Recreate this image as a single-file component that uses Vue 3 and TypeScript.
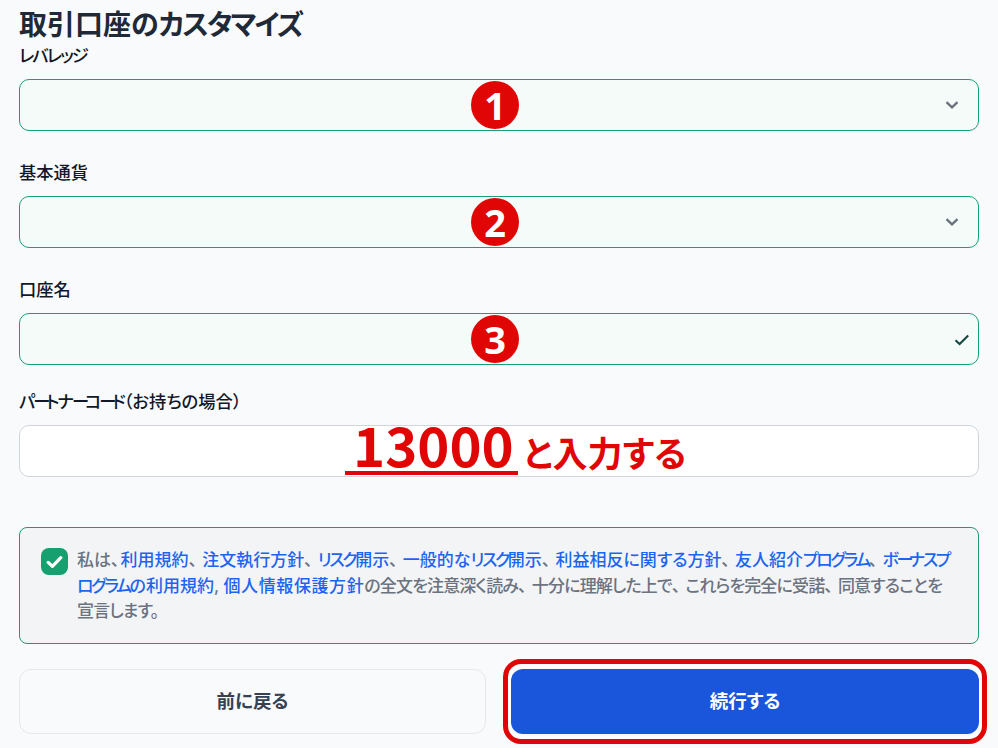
<script setup lang="ts">
interface Field { label: string; badge: string; icon: 'chevron' | 'check'; }
interface Run { text: string; cls: string; }
interface Segment { text: string; link?: boolean; cls?: string; }

const fields: Field[] = [
  { label: 'レバレッジ', badge: '1', icon: 'chevron' },
  { label: '基本通貨', badge: '2', icon: 'chevron' },
  { label: '口座名', badge: '3', icon: 'check' },
];

const agreement: Segment[] = [
  { text: '私は、', cls: 'intro' },
  { text: '利用規約', link: true }, { text: '、' },
  { text: '注文執行方針', link: true }, { text: '、' },
  { text: 'リスク開示', link: true }, { text: '、' },
  { text: '一般的なリスク開示', link: true }, { text: '、' },
  { text: '利益相反に関する方針', link: true }, { text: '、' },
  { text: '友人紹介プログラム', link: true }, { text: '、' },
  { text: 'ボーナスプログラムの利用規約', link: true }, { text: ', ' },
  { text: '個人情報保護方針', link: true, cls: 'wide' },
  { text: 'の全文を注意深く読み、十分に理解した上で、これらを完全に受諾、同意することを宣言します。', cls: 'tail' },
];

// Katakana runs and the long vowel mark are set tighter than kanji, and the comma wider.
function runs(text: string): Run[] {
  const parts = text.match(/ー|[ァ-ヶ]+|、|[^ァ-ヶー、]+/g) ?? [];
  return parts.map((part) => ({
    text: part,
    cls: part === 'ー' ? 'long' : /^[ァ-ヶ]/.test(part) ? 'kana' : part === '、' ? 'comma' : '',
  }));
}
</script>

<template>
  <main class="page">
    <h1 class="title"><span v-for="(r, i) in runs('取引口座のカスタマイズ')" :key="i" :class="r.cls">{{ r.text }}</span></h1>

    <div v-for="f in fields" :key="f.label" class="group">
      <div class="label"><span v-for="(r, i) in runs(f.label)" :key="i" :class="r.cls">{{ r.text }}</span></div>
      <div class="field valid">
        <span class="badge">{{ f.badge }}</span>
        <svg v-if="f.icon === 'chevron'" class="chevron" width="14" height="10" viewBox="0 0 14 10" fill="none">
          <path d="M1.5 2.2 7 7.4l5.5-5.2" stroke="#6b7280" stroke-width="2.4" />
        </svg>
        <svg v-else class="check" width="16" height="12" viewBox="0 0 16 12" fill="none">
          <path d="M1.5 6.2 5.6 10 14.2 1.5" stroke="#14473f" stroke-width="2" />
        </svg>
      </div>
    </div>

    <div class="group partner">
      <div class="label"><span v-for="(r, i) in runs('パートナーコード（お持ちの場合）')" :key="i" :class="r.cls">{{ r.text }}</span></div>
      <div class="field plain">
        <div class="note"><span class="code">13000</span><span class="note-text">と入力する</span></div>
      </div>
    </div>

    <div class="agree">
      <span class="box">
        <svg width="17" height="14" viewBox="0 0 17 14" fill="none">
          <path d="M2.2 7.4 6.4 11.4 14.8 2.6" stroke="#fff" stroke-width="3.2" stroke-linecap="round" stroke-linejoin="round" />
        </svg>
      </span>
      <p class="agree-text"><template v-for="(seg, s) in agreement" :key="s"><component :is="seg.link ? 'a' : 'span'" :class="seg.cls"><span v-for="(r, i) in runs(seg.text)" :key="i" :class="r.cls">{{ r.text }}</span></component></template></p>
    </div>

    <div class="actions">
      <button class="btn back" type="button">前に戻る</button>
      <button class="btn next" type="button">続行する</button>
    </div>
  </main>
</template>

<style scoped>
.page {
  box-sizing: border-box;
  width: 998px;
  height: 748px;
  padding: 7px 19px 0;
  overflow: hidden;
  background: #f9fafb;
  font-family: Inter, "Noto Sans CJK JP", sans-serif;
  font-feature-settings: "palt";
  color: #1f2937;
}
.kana { letter-spacing: -0.11em; }
.long { letter-spacing: -0.25em; }
.comma { letter-spacing: 0.3em; }
.title {
  margin: 0;
  font-size: 28px;
  line-height: 36px;
  font-weight: 600;
  color: #1f2937;
}
.title .kana { letter-spacing: -0.07em; }
.group { margin-bottom: 29px; }
.group:nth-of-type(3) { margin-bottom: 24px; }
.label {
  height: 26px;
  margin-bottom: 10px;
  font-size: 17.3px;
  line-height: 26px;
  font-weight: 500;
  color: #111827;
}
.field {
  position: relative;
  box-sizing: border-box;
  height: 52px;
  border-radius: 10px;
  border: 1px solid #d1d5db;
  background: #fff;
}
.valid {
  border-color: #16a07a;
  background: #f4fbf8;
}
.badge {
  position: absolute;
  left: 451px;
  top: 1px;
  width: 48px;
  height: 48px;
  border-radius: 50%;
  background: #e00606;
  color: #fff;
  font: 700 38px/48px "Open Sans", sans-serif;
  text-align: center;
}
.chevron { position: absolute; right: 19px; top: 20px; }
.check { position: absolute; right: 8px; top: 20px; }
.partner { margin-bottom: 50px; }
.note {
  position: absolute;
  left: 325px;
  top: -10px;
  display: flex;
  align-items: flex-end;
  color: #e00606;
  font-weight: 700;
  white-space: pre;
  font-family: "Noto Sans CJK JP", sans-serif;
}
.code {
  font-size: 54.5px;
  line-height: 55px;
  padding: 0 4.5px 0 8px;
  border-bottom: 4px solid #e00606;
}
.note-text {
  font-size: 35px;
  line-height: 46px;
  margin-left: 5px;
}
.agree {
  box-sizing: border-box;
  height: 117px;
  display: flex;
  gap: 9px;
  padding: 20px 21px;
  border: 1px solid #1f9a75;
  border-radius: 8px;
  background: #f3f4f6;
}
.box {
  flex: none;
  width: 27px;
  height: 27px;
  border-radius: 8px;
  background: #16a06f;
  display: flex;
  align-items: center;
  justify-content: center;
}
.agree-text {
  margin: 0;
  font-size: 17px;
  line-height: 25.6px;
  font-weight: 500;
  color: #6b7280;
}
.agree-text a { color: #1c64f2; }
.agree-text .kana { letter-spacing: -0.14em; }
.intro { margin-right: -4px; }
.wide { letter-spacing: 0.6px; }
.tail { letter-spacing: -0.85px; }
.actions {
  display: grid;
  grid-template-columns: 467px 468px;
  gap: 25px;
  margin-top: 25px;
}
.btn {
  height: 65px;
  border-radius: 12px;
  font-family: inherit;
  font-feature-settings: "palt";
  font-size: 18.5px;
  font-weight: 600;
  padding: 0 0 3px;
}
.back {
  border: 1px solid #e5e7eb;
  background: transparent;
  color: #374151;
}
.next {
  position: relative;
  border: none;
  background: #1a56db;
  color: #fff;
}
.next::after {
  content: "";
  position: absolute;
  inset: -10px -8px;
  border: 5px solid #e00606;
  border-radius: 18px;
  box-shadow: inset 0 0 0 3px #fff;
}
</style>
